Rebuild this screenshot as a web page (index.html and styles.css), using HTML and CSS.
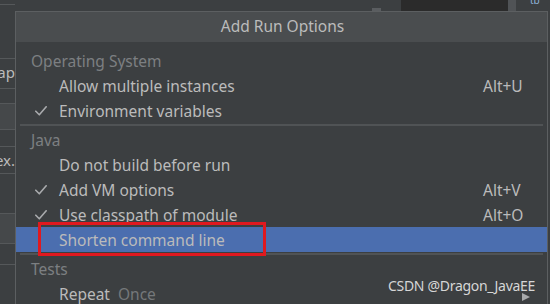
FILE: index.html
```html
<!DOCTYPE html>
<html>
<head>
<meta charset="utf-8">
<link rel="stylesheet" href="styles.css">
</head>
<body>
<div class="screen">
  <div class="backdrop">
    <div class="topbar">
      <span class="tab-nub"></span>
      <span class="dark-pane"></span>
      <span class="scroll-strip"></span>
      <span class="tb">tb</span>
    </div>
    <div class="side">
      <div class="band b1"></div>
      <div class="band b2"><span class="frag">ap</span></div>
      <div class="band b3"></div>
      <div class="band b4 light"></div>
      <div class="band b5"></div>
      <div class="band b6"><span class="frag">ex.</span></div>
      <div class="band b7"></div>
      <div class="band b8 light"></div>
      <div class="band b9"></div>
      <div class="band b10"></div>
    </div>
  </div>

  <div class="popup">
    <div class="popup-header">Add Run Options</div>
    <div class="popup-body">
      <div class="row section">Operating System</div>
      <div class="row item"><span class="check"></span><span class="label">Allow multiple instances</span><span class="key">Alt+U</span></div>
      <div class="row item"><span class="check"><svg class="tick" viewBox="0 0 12 10" width="12" height="10"><polyline points="0.8,5.2 4.3,8.8 11.2,0.8"/></svg></span><span class="label">Environment variables</span><span class="key"></span></div>
      <div class="sep"></div>
      <div class="row section">Java</div>
      <div class="row item"><span class="check"></span><span class="label">Do not build before run</span><span class="key"></span></div>
      <div class="row item"><span class="check"><svg class="tick" viewBox="0 0 12 10" width="12" height="10"><polyline points="0.8,5.2 4.3,8.8 11.2,0.8"/></svg></span><span class="label">Add VM options</span><span class="key">Alt+V</span></div>
      <div class="row item"><span class="check"><svg class="tick" viewBox="0 0 12 10" width="12" height="10"><polyline points="0.8,5.2 4.3,8.8 11.2,0.8"/></svg></span><span class="label">Use classpath of module</span><span class="key">Alt+O</span></div>
      <div class="row item selected"><span class="check"></span><span class="label">Shorten command line</span><span class="key"></span></div>
      <div class="sep"></div>
      <div class="row section">Tests</div>
      <div class="row item"><span class="check"></span><span class="label">Repeat <span class="hint">Once</span></span><span class="key"><span class="arrow"></span></span></div>
    </div>
    <div class="redbox"></div>
  </div>

  <div class="watermark">CSDN @Dragon_JavaEE</div>
</div>
</body>
</html>
```

FILE: styles.css
```css
html, body {
  margin: 0;
  padding: 0;
}
body {
  width: 550px;
  height: 304px;
  overflow: hidden;
  background: #3c3f41;
  font-family: "Noto Sans", "Open Sans", "Liberation Sans", sans-serif;
}
.screen {
  position: relative;
  width: 550px;
  height: 304px;
  overflow: hidden;
}
.backdrop {
  width: 550px;
  height: 304px;
  display: flex;
  flex-direction: column;
}
.topbar {
  height: 11px;
  position: relative;
  background: #3c3f41;
  display: flex;
}
.tab-nub {
  position: absolute;
  left: 372px;
  top: 8px;
  width: 9px;
  height: 3px;
  background: #5a5d60;
}
.dark-pane {
  position: absolute;
  left: 401px;
  top: 0;
  width: 108px;
  height: 11px;
  background: #2b2b2b;
}
.scroll-strip {
  position: absolute;
  left: 508px;
  top: 0;
  width: 8px;
  height: 11px;
  background: #505356;
}
.tb {
  position: absolute;
  left: 530px;
  top: -6px;
  font-size: 10px;
  line-height: 12px;
  color: #8fb3d9;
}
.side {
  width: 15px;
  flex: 1;
  display: flex;
  flex-direction: column;
  margin-top: 2px;
}
.band {
  border-top: 1px solid #55585a;
  position: relative;
  overflow: hidden;
  box-sizing: border-box;
}
.band.light { background: #45484a; }
.b1 { height: 54px; }
.b2 { height: 30px; }
.b3 { height: 15px; }
.b4 { height: 26px; }
.b5 { height: 17px; }
.b6 { height: 27px; }
.b7 { height: 40px; }
.b8 { height: 30px; }
.b9 { height: 21px; }
.b10 { height: 40px; }
.frag {
  position: absolute;
  right: 0;
  top: 4px;
  font-size: 15px;
  color: #bbbbbb;
  line-height: 18px;
}
.popup {
  position: absolute;
  left: 15px;
  top: 11px;
  width: 533px;
  height: 300px;
  background: #3c3f41;
  border-left: 1px solid #5c5f61;
  border-top: 1px solid #5c5f61;
  border-right: 1px solid #5c5f61;
  box-sizing: border-box;
}
.popup-header {
  height: 30px;
  background: #4a4d4f;
  color: #bbbbbb;
  font-size: 15.5px;
  line-height: 29px;
  text-align: center;
  padding-left: 2px;
}
.popup-body {
  padding-top: 6px;
  display: flex;
  flex-direction: column;
}
.row {
  height: 25px;
  display: flex;
  align-items: center;
  font-size: 15.5px;
  color: #bbbbbb;
  white-space: nowrap;
}
.section {
  padding-left: 15px;
  color: #7c7f82;
}
.item .check {
  width: 43px;
  padding-left: 19px;
  box-sizing: border-box;
  display: flex;
  align-items: center;
}
.tick {
  display: block;
  fill: none;
  stroke: #a9abad;
  stroke-width: 1.6;
  stroke-linecap: round;
  stroke-linejoin: round;
}
.item .label {
  flex: 1;
}
.item .key {
  width: 64px;
  text-align: left;
  position: relative;
}
.hint {
  color: #75787a;
  margin-left: 4px;
}
.selected {
  background: #4b6eaf;
}
.sep {
  height: 4px;
  display: flex;
  align-items: center;
  padding: 0 4px;
}
.sep::before {
  content: "";
  flex: 1;
  height: 2px;
  background: #505355;
}
.arrow {
  position: absolute;
  left: 39px;
  top: -1px;
  width: 0;
  height: 0;
  border-left: 8px solid #a7a9ab;
  border-top: 4px solid transparent;
  border-bottom: 4px solid transparent;
}
.redbox {
  position: absolute;
  left: 22px;
  top: 210px;
  width: 228px;
  height: 34px;
  border: 3px solid #e0191f;
  box-sizing: border-box;
}
.watermark {
  position: absolute;
  left: 388px;
  top: 276px;
  font-size: 14px;
  color: #d6d6d6;
  letter-spacing: -0.3px;
}
```
